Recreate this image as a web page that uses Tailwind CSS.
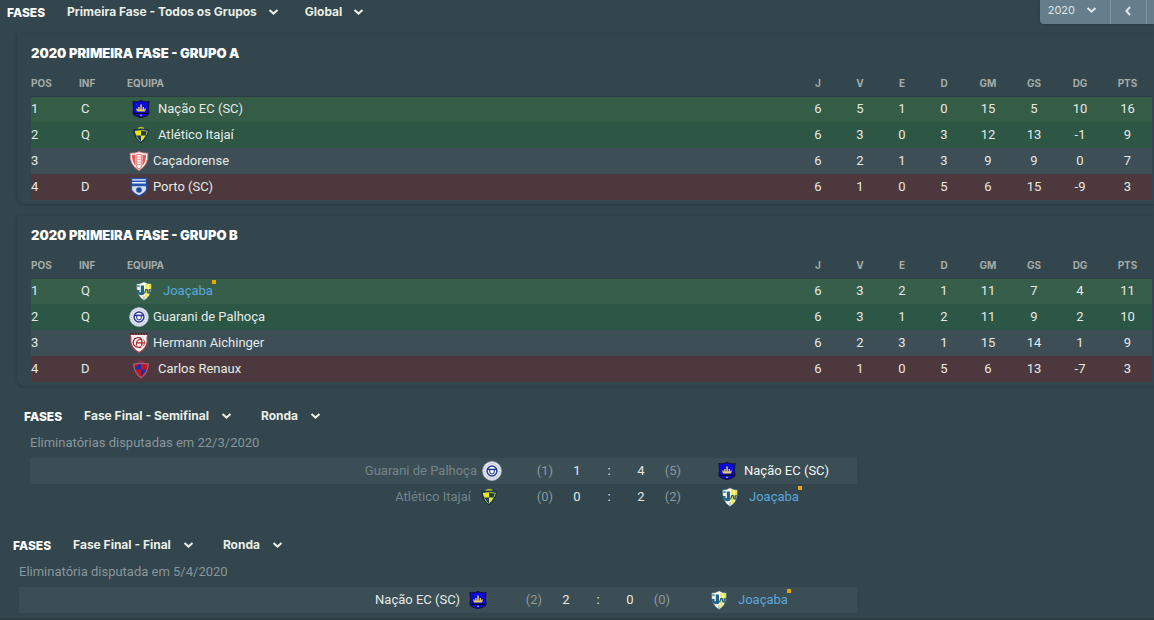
<!DOCTYPE html>
<html lang="pt">
<head>
<meta charset="utf-8">
<meta name="viewport" content="width=device-width, initial-scale=1">
<title>Fases</title>
<script src="https://cdn.jsdelivr.net/npm/@tailwindcss/browser@4"></script>
</head>
<body class="min-h-screen overflow-x-hidden bg-[#33464d] font-[Roboto,sans-serif] text-[13px] leading-5 text-[#e4e9e6]">

<svg class="hidden" aria-hidden="true">
  <symbol id="chevron" viewBox="0 0 10 6"><path d="M1 1l4 3.6L9 1" fill="none" stroke="currentColor" stroke-width="2"/></symbol>
  <symbol id="nacao" viewBox="0 0 20 20">
    <path d="M2 2.500 Q6 3.500 10 1.500 Q14 3.500 18 2.500 Q16.800 9 18 14.500 Q17 17 10 18.500 Q3 17 2 14.500 Q3.200 9 2 2.500Z" fill="#0a08e0" stroke="#14143c" stroke-width="1.200"/>
    <path d="M3.500 13.500h13v1.500h-13z" fill="#08081c"/>
    <path d="M5 9.500h1.500v1h7V9.500H15l-1 3H6z M9.300 5.500h1.500v5H9.300z M7.200 8h1.400v2.500H7.200z M11.600 8H13v2.500h-1.400z" fill="#e6cf58"/>
    <path d="M8.600 15.800h2.800l-1.400 1.400z" fill="#d8c24e"/>
  </symbol>
  <symbol id="atletico" viewBox="0 0 20 20">
    <path d="M6.500 2.500Q10 1 13.500 2.500V4h-7z" fill="#e8e01c" stroke="#27445a" stroke-width=".6"/>
    <path d="M2.500 4.800Q10 3.500 17.500 4.800Q17 13 10 18Q3 13 2.500 4.800Z" fill="#1d3b57" stroke="#17324c" stroke-width="1"/>
    <path d="M3.800 6Q7 5.200 10 5.200V10.400H5.200Q4.200 8.500 3.800 6Z M10 10.400h4.800Q13.200 13.800 10 16.600Z" fill="#ece51b"/>
    <path d="M10.500 5.300l5.800.8-1.200 4" stroke="#c9c83a" stroke-width=".9" fill="none"/>
    <path d="M5.600 11.500Q7 14.500 9.500 16.500" stroke="#c9c83a" stroke-width=".9" fill="none"/>
  </symbol>
  <symbol id="cacador" viewBox="0 0 20 20">
    <path d="M10 .8Q14 2.500 18.800 2.300Q19.600 14 10 19.400Q.4 14 1.200 2.300Q6 2.500 10 .8Z" fill="#fff" stroke="#dc8f8c" stroke-width="1"/>
    <path d="M3 3.800h3.600V15Q2.800 11 3 3.800Z M17 3.800h-3.600V15Q17.200 11 17 3.800Z" fill="#e35b5b"/>
    <path d="M7.800 3.400h4.400V16.500L10 18l-2.200-1.500z" fill="none" stroke="#db5452" stroke-width=".9"/>
    <path d="M8.300 6h3.400M8.300 8.500h3.400M8.300 11h3.400M8.300 13.500h3.400" stroke="#e9a09e" stroke-width="1"/>
  </symbol>
  <symbol id="porto" viewBox="0 0 20 20">
    <path d="M2.500 1.500h15V12Q17 15.500 10 19Q3 15.500 2.500 12Z" fill="#e9eef6" stroke="#254fae" stroke-width="1.400"/>
    <path d="M3 3.600h14v1.400H3z M3 6.600h14v3H3z" fill="#2453b4"/>
    <path d="M3.200 9.600h13.600l-.4 4Q14 16 10 17.800Q6 16 3.600 13.600Z" fill="#d4dff0"/>
    <circle cx="10" cy="13" r="2.800" fill="#1d469f"/>
  </symbol>
  <symbol id="joacaba" viewBox="0 0 20 20">
    <path d="M2.500 3Q6.500 3 10 .8Q13.500 3 17.500 3Q18 15 10 19.600Q2 15 2.500 3Z" fill="#f6f8ee" stroke="#326276" stroke-width=".6"/>
    <path d="M11.500 2.500Q14 3.600 17 3.600Q17.400 13.500 11.500 17.800Z" fill="#eee52e"/>
    <path d="M14 3.300v12" stroke="#fbfbe9" stroke-width="1.300"/>
    <path d="M6.800 4.500h3.200v9Q6.500 15.500 3.400 12l-.5-3h2.600v2.200h1.300z" fill="#216389"/>
    <path d="M3.200 4.300h2.600v1.500H3.200z" fill="#3a7d9c"/>
    <path d="M10.500 12.500l1.400-4h1.200l1 4M17.600 8.800h-2.400v3.200h2.400" fill="none" stroke="#1e5578" stroke-width="1.200"/>
    <path d="M10 15v4" stroke="#85b2a5" stroke-width="1"/>
  </symbol>
  <symbol id="guarani" viewBox="0 0 20 20">
    <circle cx="10" cy="10" r="9.400" fill="#e8ebf2" stroke="#aeb7c9" stroke-width=".8"/>
    <circle cx="10" cy="10" r="7.400" fill="none" stroke="#b4bcd6" stroke-width="1.200" stroke-dasharray="1.200 1"/>
    <circle cx="10" cy="10" r="4.900" fill="#fff" stroke="#273d91" stroke-width="1.500"/>
    <path d="M5.500 7.600h9v1.600h-9z" fill="#263c94"/>
    <path d="M7.700 8.500v2.500Q8 12.800 10 13Q12 12.800 12.300 11V8.500" fill="none" stroke="#263c94" stroke-width="1.100"/>
  </symbol>
  <symbol id="hermann" viewBox="0 0 20 20">
    <path d="M.8 1.200Q2.500 5 1.600 8Q2 15.500 10 19.500Q18 15.500 18.400 8Q17.500 5 19.200 1.200Z" fill="#f6f0f0" stroke="#a03c41" stroke-width="1.200"/>
    <path d="M.8 1h18.400" stroke="#321b21" stroke-width="1.400" stroke-dasharray="1.700 1"/>
    <path d="M12.500 5.800Q9 3.400 5.400 6.100Q3 9.500 5.400 12.700Q8.500 15 12.500 14" fill="none" stroke="#a8242c" stroke-width="1.300"/>
    <path d="M7.500 12.500Q7 7 11 6.500H12.800V13M8 9.800h8.500" fill="none" stroke="#a8242c" stroke-width="1.200"/>
    <path d="M14.500 6.500Q17 9 14.500 13" fill="none" stroke="#c0545a" stroke-width="1"/>
  </symbol>
  <symbol id="renaux" viewBox="0 0 20 20">
    <path d="M7 3.200Q10 1 13 3.200" fill="none" stroke="#a62a42" stroke-width="1.200"/>
    <path d="M2.600 5Q10 3.600 17.400 5Q16.800 14 10 18.800Q3.200 14 2.600 5Z" fill="#c01526" stroke="#a4677f" stroke-width="1.200"/>
    <path d="M6.500 5.500Q8 5.200 10 5.200V10.500H4.900Q4.300 9 4.100 7.500H6.500Z M10 10.500h5.100Q13.500 14.800 10 17.400Z" fill="#182fa8"/>
  </symbol>
</svg>

<main class="flex min-h-screen flex-col border-b-2 border-[#293b41]">

  <header class="flex h-6 items-start justify-between">
    <div class="flex items-center pl-[7px] font-[Inter,sans-serif] text-xs leading-5 font-bold text-[#e9eee6]">
      <h1 class="mr-[22px] pt-px leading-[23px] font-extrabold text-white">FASES</h1>
      <label class="mr-[26px] grid items-center pb-px">
        <select aria-label="Fase" class="field-sizing-content col-start-1 row-start-1 appearance-none pr-[22px]"><option>Primeira Fase - Todos os Grupos</option></select>
        <svg class="pointer-events-none col-start-1 row-start-1 h-[6px] w-[11px] justify-self-end"><use href="#chevron"/></svg>
      </label>
      <label class="grid items-center pb-px">
        <select aria-label="Vista" class="field-sizing-content col-start-1 row-start-1 appearance-none pr-[22px]"><option>Global</option></select>
        <svg class="pointer-events-none col-start-1 row-start-1 h-[6px] w-[11px] justify-self-end"><use href="#chevron"/></svg>
      </label>
    </div>
    <div class="flex h-6 overflow-hidden rounded-bl bg-[#667d8b] text-[#dde5e6] shadow">
      <label class="grid items-center pr-[13px] pb-1 pl-2">
        <select aria-label="Ano" class="field-sizing-content col-start-1 row-start-1 appearance-none pr-[22px] font-[Inter,sans-serif] text-[11px] leading-5"><option>2020</option></select>
        <svg class="pointer-events-none col-start-1 row-start-1 h-[6px] w-[11px] justify-self-end"><use href="#chevron"/></svg>
      </label>
      <button aria-label="Ano anterior" class="flex w-9 items-center justify-center border-l border-[#8195a1] pr-[2px] pb-[3px]">
        <svg class="h-[10px] w-[6px]" viewBox="0 0 6 10"><path d="M5 1L1.400 5L5 9" fill="none" stroke="currentColor" stroke-width="2"/></svg>
      </button>
      <button aria-label="Ano seguinte" class="w-2 border-l border-[#8195a1]"></button>
    </div>
  </header>

  <section class="mt-[10px] ml-[17px] rounded-bl-lg pr-[2px] pb-1 pl-[14px] shadow-[0_1px_3px_rgba(20,35,40,0.35)]">
    <h2 class="pt-[9px] font-[Inter,sans-serif] text-[13px] leading-5 font-black text-white">2020 PRIMEIRA FASE - GRUPO A</h2>
    <table class="mt-2 w-full table-fixed text-center">
      <thead class="font-[Inter,sans-serif] text-[10px] leading-6 text-[#a3aca9]">
        <tr class="h-[25px] border-b border-[#2b3d43]">
          <th class="w-12 text-left">POS</th><th class="w-12 text-left">INF</th><th class="text-left">EQUIPA</th>
          <th class="w-[42px]">J</th><th class="w-[42px]">V</th><th class="w-[42px]">E</th><th class="w-[42px]">D</th>
          <th class="w-[46px]">GM</th><th class="w-[46px]">GS</th><th class="w-[46px]">DG</th><th class="w-[49px]">PTS</th>
        </tr>
      </thead>
      <tbody>
        <tr class="h-[26px] bg-[#355c46]">
          <td class="text-left">1</td><td class="pl-[2px] text-left">C</td>
          <td><div class="flex items-center gap-[7px] pl-1"><svg class="size-5"><use href="#nacao"/></svg>Nação EC (SC)</div></td>
          <td>6</td><td>5</td><td>1</td><td>0</td><td>15</td><td>5</td><td>10</td><td>16</td>
        </tr>
        <tr class="h-[26px] bg-[#2d5645]">
          <td class="text-left">2</td><td class="pl-[2px] text-left">Q</td>
          <td><div class="flex items-center gap-[7px] pl-1"><svg class="size-5"><use href="#atletico"/></svg>Atlético Itajaí</div></td>
          <td>6</td><td>3</td><td>0</td><td>3</td><td>12</td><td>13</td><td>-1</td><td>9</td>
        </tr>
        <tr class="h-[26px] bg-[#3d4e56]">
          <td class="text-left">3</td><td></td>
          <td><div class="flex items-center gap-1 pl-[2px]"><svg class="size-5"><use href="#cacador"/></svg>Caçadorense</div></td>
          <td>6</td><td>2</td><td>1</td><td>3</td><td>9</td><td>9</td><td>0</td><td>7</td>
        </tr>
        <tr class="h-[26px] bg-[#4d393d]">
          <td class="text-left">4</td><td class="pl-[2px] text-left">D</td>
          <td><div class="flex items-center gap-1 pl-[2px]"><svg class="size-5"><use href="#porto"/></svg>Porto (SC)</div></td>
          <td>6</td><td>1</td><td>0</td><td>5</td><td>6</td><td>15</td><td>-9</td><td>3</td>
        </tr>
      </tbody>
    </table>
  </section>

  <section class="mt-3 ml-[17px] rounded-bl-lg pr-[2px] pb-1 pl-[14px] shadow-[0_1px_3px_rgba(20,35,40,0.35)]">
    <h2 class="pt-[9px] font-[Inter,sans-serif] text-[13px] leading-5 font-black text-white">2020 PRIMEIRA FASE - GRUPO B</h2>
    <table class="mt-2 w-full table-fixed text-center">
      <thead class="font-[Inter,sans-serif] text-[10px] leading-6 text-[#a3aca9]">
        <tr class="h-[25px] border-b border-[#2b3d43]">
          <th class="w-12 text-left">POS</th><th class="w-12 text-left">INF</th><th class="text-left">EQUIPA</th>
          <th class="w-[42px]">J</th><th class="w-[42px]">V</th><th class="w-[42px]">E</th><th class="w-[42px]">D</th>
          <th class="w-[46px]">GM</th><th class="w-[46px]">GS</th><th class="w-[46px]">DG</th><th class="w-[49px]">PTS</th>
        </tr>
      </thead>
      <tbody>
        <tr class="h-[26px] bg-[#375e4b]">
          <td class="text-left">1</td><td class="pl-[2px] text-left">Q</td>
          <td><div class="flex items-center gap-[9px] pl-[7px]"><svg class="size-5"><use href="#joacaba"/></svg><a href="#" class="relative text-[#5ba6dc]">Joaçaba<span class="absolute -top-px -right-[3px] size-1 bg-[#e3a70c]"></span></a></div></td>
          <td>6</td><td>3</td><td>2</td><td>1</td><td>11</td><td>7</td><td>4</td><td>11</td>
        </tr>
        <tr class="h-[26px] bg-[#2c5645]">
          <td class="text-left">2</td><td class="pl-[2px] text-left">Q</td>
          <td><div class="flex items-center gap-1 pl-[2px]"><svg class="size-5"><use href="#guarani"/></svg>Guarani de Palhoça</div></td>
          <td>6</td><td>3</td><td>1</td><td>2</td><td>11</td><td>9</td><td>2</td><td>10</td>
        </tr>
        <tr class="h-[26px] bg-[#3d4e56]">
          <td class="text-left">3</td><td></td>
          <td><div class="flex items-center gap-1 pl-[2px]"><svg class="size-5"><use href="#hermann"/></svg>Hermann Aichinger</div></td>
          <td>6</td><td>2</td><td>3</td><td>1</td><td>15</td><td>14</td><td>1</td><td>9</td>
        </tr>
        <tr class="h-[26px] bg-[#4d393d]">
          <td class="text-left">4</td><td class="pl-[2px] text-left">D</td>
          <td><div class="flex items-center gap-[7px] pl-1"><svg class="size-5"><use href="#renaux"/></svg>Carlos Renaux</div></td>
          <td>6</td><td>1</td><td>0</td><td>5</td><td>6</td><td>13</td><td>-7</td><td>3</td>
        </tr>
      </tbody>
    </table>
  </section>

  <section class="mt-[19px] pl-6">
    <div class="flex items-center font-[Inter,sans-serif] text-xs leading-5 font-bold text-[#e9eee6]">
      <h2 class="mr-[22px] pt-px leading-[22px] font-extrabold text-white">FASES</h2>
      <label class="mr-[29px] grid items-center pb-[2px]">
        <select aria-label="Fase" class="field-sizing-content col-start-1 row-start-1 appearance-none pr-[23px]"><option>Fase Final - Semifinal</option></select>
        <svg class="pointer-events-none col-start-1 row-start-1 h-[6px] w-[11px] justify-self-end"><use href="#chevron"/></svg>
      </label>
      <label class="grid items-center pb-[2px]">
        <select aria-label="Vista" class="field-sizing-content col-start-1 row-start-1 appearance-none pr-[23px]"><option>Ronda</option></select>
        <svg class="pointer-events-none col-start-1 row-start-1 h-[6px] w-[11px] justify-self-end"><use href="#chevron"/></svg>
      </label>
    </div>
    <div class="max-w-[833px] pl-[6px]">
      <p class="pt-[5px] pb-[5px] text-[#88959a]">Eliminatórias disputadas em 22/3/2020</p>
      <table class="w-full table-fixed text-center text-[#8b989c]">
        <colgroup><col class="w-[499px]"><col class="w-8"><col class="w-8"><col class="w-8"><col class="w-8"><col class="w-8"><col></colgroup>
        <tbody>
          <tr class="h-[26px] bg-[#3c4e55]">
            <td><div class="flex items-center justify-end gap-[5px] pr-[27px] text-[#74848a]">Guarani de Palhoça<svg class="size-5"><use href="#guarani"/></svg></div></td>
            <td>(1)</td><td class="text-[#e4e9e6]">1</td><td class="text-[#e4e9e6]">:</td><td class="text-[#e4e9e6]">4</td><td>(5)</td>
            <td><div class="flex items-center gap-[7px] pl-[28px] text-[#f1f4ee]"><svg class="size-5"><use href="#nacao"/></svg>Nação EC (SC)</div></td>
          </tr>
          <tr class="h-[26px]">
            <td><div class="flex items-center justify-end gap-2 pr-[30px] text-[#74848a]">Atlético Itajaí<svg class="size-5"><use href="#atletico"/></svg></div></td>
            <td>(0)</td><td class="text-[#e4e9e6]">0</td><td class="text-[#e4e9e6]">:</td><td class="text-[#e4e9e6]">2</td><td>(2)</td>
            <td><div class="flex items-center gap-[9px] pl-[31px]"><svg class="size-5"><use href="#joacaba"/></svg><a href="#" class="relative text-[#5ba6dc]">Joaçaba<span class="absolute -top-px -right-[3px] size-1 bg-[#e3a70c]"></span></a></div></td>
          </tr>
        </tbody>
      </table>
    </div>
  </section>

  <section class="mt-6 pl-[13px]">
    <div class="flex items-center font-[Inter,sans-serif] text-xs leading-5 font-bold text-[#e9eee6]">
      <h2 class="mr-[22px] pt-px leading-[22px] font-extrabold text-white">FASES</h2>
      <label class="mr-[29px] grid items-center pb-[2px]">
        <select aria-label="Fase" class="field-sizing-content col-start-1 row-start-1 appearance-none pr-[23px]"><option>Fase Final - Final</option></select>
        <svg class="pointer-events-none col-start-1 row-start-1 h-[6px] w-[11px] justify-self-end"><use href="#chevron"/></svg>
      </label>
      <label class="grid items-center pb-[2px]">
        <select aria-label="Vista" class="field-sizing-content col-start-1 row-start-1 appearance-none pr-[23px]"><option>Ronda</option></select>
        <svg class="pointer-events-none col-start-1 row-start-1 h-[6px] w-[11px] justify-self-end"><use href="#chevron"/></svg>
      </label>
    </div>
    <div class="max-w-[844px] pl-[6px]">
      <p class="pt-[5px] pb-[5px] text-[#88959a]">Eliminatória disputada em 5/4/2020</p>
      <table class="w-full table-fixed text-center text-[#8b989c]">
        <colgroup><col class="w-[499px]"><col class="w-8"><col class="w-8"><col class="w-8"><col class="w-8"><col class="w-8"><col></colgroup>
        <tbody>
          <tr class="h-[26px] bg-[#3c4e55]">
            <td><div class="flex items-center justify-end gap-2 pr-[30px] text-[#e4e9e6]">Nação EC (SC)<svg class="size-5"><use href="#nacao"/></svg></div></td>
            <td>(2)</td><td class="text-[#e4e9e6]">2</td><td class="text-[#e4e9e6]">:</td><td class="text-[#e4e9e6]">0</td><td>(0)</td>
            <td><div class="flex items-center gap-[9px] pl-[31px]"><svg class="size-5"><use href="#joacaba"/></svg><a href="#" class="relative text-[#5ba6dc]">Joaçaba<span class="absolute -top-px -right-[3px] size-1 bg-[#e3a70c]"></span></a></div></td>
          </tr>
        </tbody>
      </table>
    </div>
  </section>
</main>
</body>
</html>
